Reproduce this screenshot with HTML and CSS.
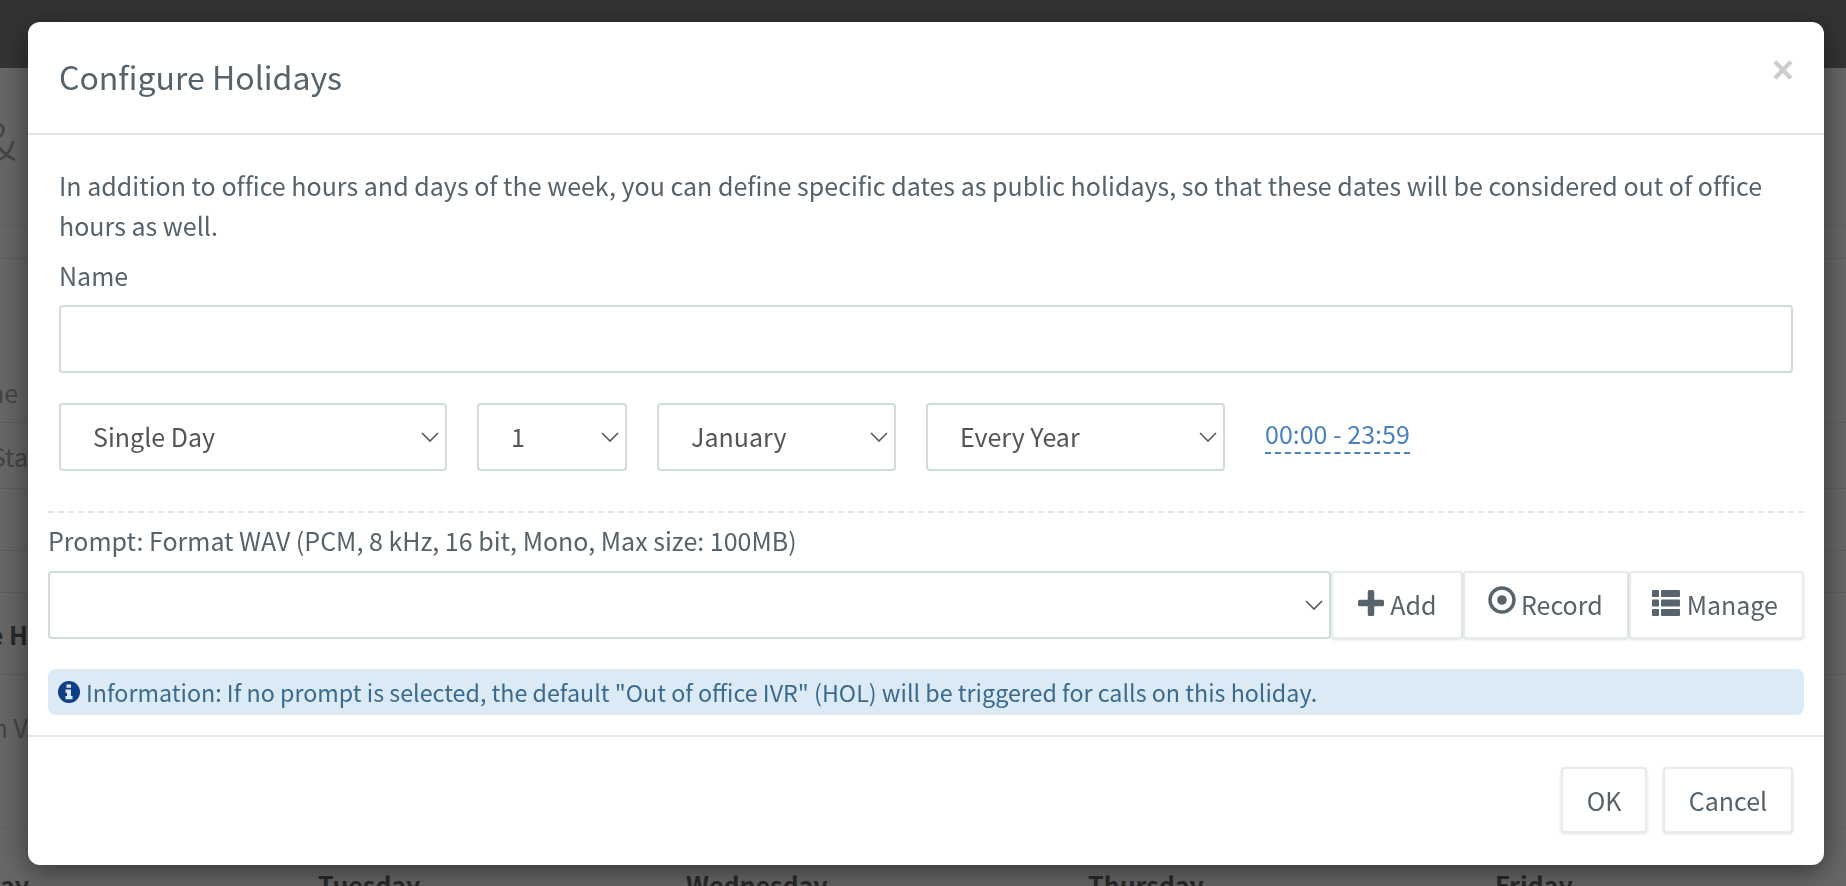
FILE: index.html
```html
<!DOCTYPE html>
<html lang="en">
<head>
    <meta charset="UTF-8">
    <meta name="viewport" content="width=device-width, initial-scale=1.0">
    <title>Configure Holidays</title>
    <link rel="stylesheet" href="styles.css">
</head>
<body>
    <!-- page behind the dialog -->
    <div class="page">
        <div class="topbar"></div>
        <div class="row row-title"><span class="amp">&amp;</span></div>
        <div class="row row-a"></div>
        <div class="row row-b"><span class="peek peek-ne">ne</span></div>
        <div class="row row-c"><span class="peek">Sta</span></div>
        <div class="row row-d"></div>
        <div class="row row-e"></div>
        <div class="row row-f"><span class="peek peek-bold">e H</span></div>
        <div class="row row-g"><span class="peek peek-top">m V</span></div>
        <div class="days">
            <span class="day day-mon">ay</span>
            <span class="day day-tue">Tuesday</span>
            <span class="day day-wed">Wednesday</span>
            <span class="day day-thu">Thursday</span>
            <span class="day day-fri">Friday</span>
        </div>
    </div>
    <div class="backdrop"></div>

    <div class="modal">
        <header class="modal-header">
            <h4 class="modal-title">Configure Holidays</h4>
            <button class="close">×</button>
        </header>
        <section class="modal-body">
            <div class="holiday-form">
                <p class="intro">In addition to office hours and days of the week, you can define specific dates as public holidays, so that these dates will be considered out of office hours as well.</p>
                <label class="field-label" for="holidayName">Name</label>
                <input class="text-input" type="text" id="holidayName">
                <div class="date-row">
                    <div class="select-wrap w-type">
                        <select><option>Single Day</option></select>
                        <svg class="chevron" viewBox="0 0 18 10"><path d="M1 1l8 8 8-8"/></svg>
                    </div>
                    <div class="select-wrap w-day">
                        <select><option>1</option></select>
                        <svg class="chevron" viewBox="0 0 18 10"><path d="M1 1l8 8 8-8"/></svg>
                    </div>
                    <div class="select-wrap w-month">
                        <select><option>January</option></select>
                        <svg class="chevron" viewBox="0 0 18 10"><path d="M1 1l8 8 8-8"/></svg>
                    </div>
                    <div class="select-wrap w-year">
                        <select><option>Every Year</option></select>
                        <svg class="chevron" viewBox="0 0 18 10"><path d="M1 1l8 8 8-8"/></svg>
                    </div>
                    <a class="time-link" href="#time">00:00 - 23:59</a>
                </div>
            </div>
            <div class="prompt">
                <label class="prompt-label">Prompt: Format WAV (PCM, 8 kHz, 16 bit, Mono, Max size: 100MB)</label>
                <div class="prompt-group">
                    <div class="select-wrap w-prompt">
                        <select><option></option></select>
                        <svg class="chevron" viewBox="0 0 18 10"><path d="M1 1l8 8 8-8"/></svg>
                    </div>
                    <button class="btn btn-add">
                        <svg class="icon" viewBox="1 1 24 24"><path d="M10 2.500a1.500 1.500 0 0 1 1.500-1.500h3a1.500 1.500 0 0 1 1.500 1.500v7.500h7.500a1.500 1.500 0 0 1 1.500 1.500v3a1.500 1.500 0 0 1-1.500 1.500h-7.500v7.500a1.500 1.500 0 0 1-1.500 1.500h-3a1.500 1.500 0 0 1-1.500-1.500v-7.500h-7.500a1.500 1.500 0 0 1-1.500-1.500v-3a1.500 1.500 0 0 1 1.500-1.500h7.500z"/></svg>
                        Add
                    </button>
                    <button class="btn btn-record">
                        <svg class="icon icon-record" viewBox="0 0 28 28"><circle cx="14" cy="14" r="12" fill="none" stroke="#57646e" stroke-width="3.4"/><circle cx="14" cy="14" r="4.800"/></svg>
                        Record
                    </button>
                    <button class="btn btn-manage">
                        <svg class="icon icon-list" viewBox="0 0 28 26"><rect x="0" y="0" width="7" height="7" rx="1"/><rect x="9" y="0" width="19" height="7" rx="1"/><rect x="0" y="9.500" width="7" height="7" rx="1"/><rect x="9" y="9.500" width="19" height="7" rx="1"/><rect x="0" y="19" width="7" height="7" rx="1"/><rect x="9" y="19" width="19" height="7" rx="1"/></svg>
                        Manage
                    </button>
                </div>
                <div class="alert-info">
                    <svg class="icon-info" viewBox="0 0 22 22"><circle cx="11" cy="11" r="11" fill="#0f4084"/><path fill="#dbeaf5" d="M8.500 3.500h4.500v3.300h-4.500zM7.500 8.500h5.500v6.500h1.500v3.300h-7v-3.300h1.500v-3.200h-1.500z"/></svg>
                    <span>Information: If no prompt is selected, the default "Out of office IVR" (HOL) will be triggered for calls on this holiday.</span>
                </div>
            </div>
        </section>
        <footer class="modal-footer">
            <button class="btn btn-ok">OK</button>
            <button class="btn btn-cancel">Cancel</button>
        </footer>
    </div>
</body>
</html>
```

FILE: styles.css
```css
* {
    box-sizing: border-box;
}

html, body {
    margin: 0;
    padding: 0;
    height: 100%;
    overflow: hidden;
}

body {
    font-family: "Noto Sans CJK SC", "Noto Sans", sans-serif;
    font-size: 25px;
    line-height: 40px;
    color: #56636d;
    background: #fff;
}

/* page behind the dialog */
.page {
    height: 886px;
    overflow: hidden;
    color: #aaa;
}

.topbar {
    height: 68px;
    background: #808080;
}

.row {
    display: flex;
    align-items: center;
    justify-content: flex-end;
    width: 100%;
    border-bottom: 1px solid #e8e8e8;
    padding-right: 1818px;
    white-space: nowrap;
}

.row-title { height: 158px; border-bottom-color: #eee; }
.row-a { height: 33px; }
.row-b { height: 164px; }
.row-c { height: 66px; }
.row-d { height: 62px; }
.row-e { height: 42px; }
.row-f { height: 82px; }
.row-g { height: 153px; border-bottom-style: dashed; }

.amp {
    font-size: 50px;
    font-weight: 300;
    margin-right: 12px;
    margin-bottom: 18px;
}

.peek-ne {
    align-self: flex-end;
    margin-right: 10px;
    margin-bottom: 10px;
}

.peek-top {
    align-self: flex-start;
    margin-top: 32px;
}

.peek-bold {
    font-weight: 700;
    color: #666;
}

.days {
    display: flex;
    font-weight: 700;
    color: #666;
    padding-top: 36px;
    white-space: nowrap;
}

.day-mon { width: 318px; }
.day-tue { width: 368px; }
.day-wed { width: 402px; }
.day-thu { width: 407px; }

.backdrop {
    position: fixed;
    inset: 0;
    background: rgba(0, 0, 0, 0.6);
}

/* dialog */
.modal {
    position: fixed;
    left: 28px;
    top: 22px;
    width: 1796px;
    height: 843px;
    background: #fff;
    border-radius: 12px;
    box-shadow: 0 6px 28px rgba(0, 0, 0, 0.5);
}

.modal-header {
    height: 113px;
    padding: 33px 31px 0;
    border-bottom: 2px solid #e5e5e5;
    position: relative;
}

.modal-title {
    margin: 0;
    font-size: 32px;
    font-weight: 400;
    line-height: 42px;
}

.close {
    position: absolute;
    top: 23px;
    right: 30px;
    padding: 0;
    border: none;
    background: none;
    font-family: "Liberation Sans", sans-serif;
    font-size: 38px;
    font-weight: 700;
    line-height: 50px;
    color: #ccc;
}

.modal-body {
    padding: 30px 20px 20px;
}

.holiday-form {
    padding: 0 11px;
}

.intro {
    margin: 0 0 10px;
    letter-spacing: 0.01px;
}

.field-label {
    display: block;
    margin-bottom: 10px;
}

.text-input {
    display: block;
    width: 100%;
    height: 68px;
    border: 2px solid #d0dbde;
    border-radius: 4px;
    font: inherit;
    margin-bottom: 30px;
}

.date-row {
    display: flex;
    align-items: center;
    gap: 30px;
}

.select-wrap {
    position: relative;
    height: 68px;
}

.select-wrap select {
    width: 100%;
    height: 100%;
    appearance: none;
    -webkit-appearance: none;
    padding: 0 0 3px 32px;
    border: 2px solid #d0dbde;
    border-radius: 4px;
    background: #fff;
    font: inherit;
    color: #555;
}

.chevron {
    position: absolute;
    right: 8px;
    top: 29px;
    width: 18px;
    height: 10px;
    fill: none;
    stroke: #555;
    stroke-width: 1.6;
}

.w-type { width: 388px; }
.w-day { width: 150px; }
.w-month { width: 239px; }
.w-year { width: 299px; }
.w-prompt { flex: 1; }

.time-link {
    margin-left: 10px;
    margin-bottom: 5px;
    padding-bottom: 1px;
    line-height: 36px;
    color: #4a82c0;
    text-decoration: none;
    border-bottom: 2px dashed #4a82c0;
}

.prompt {
    margin-top: 40px;
    border-top: 2px dashed #e2e8ea;
    padding-top: 7px;
}

.prompt-label {
    display: block;
    margin-bottom: 11px;
}

.prompt-group {
    display: flex;
    height: 68px;
}

.btn {
    height: 68px;
    padding: 0 0 2px;
    border: 2px solid #e6ebed;
    border-radius: 4px;
    background: #fff;
    font: inherit;
    color: #56636d;
    box-shadow: 0 1px 3px rgba(0, 0, 0, 0.12);
}

.btn-add { width: 132px; }
.btn-record { width: 166px; }
.btn-manage { width: 175px; padding-right: 3px; }

.icon {
    width: 26px;
    height: 26px;
    fill: #57646e;
    vertical-align: -1px;
    margin-right: 1px;
}

.icon-record {
    width: 28px;
    height: 28px;
    vertical-align: 1px;
    margin-left: -1px;
    margin-right: -1px;
}

.icon-list {
    width: 28px;
}

.alert-info {
    display: flex;
    align-items: center;
    gap: 6px;
    height: 46px;
    margin-top: 30px;
    padding-left: 10px;
    border-radius: 8px;
    background: #dbeaf5;
    color: #3a6b8f;
    font-size: 23.27px;
}

.icon-info {
    width: 22px;
    height: 22px;
    flex: none;
}

.modal-footer {
    display: flex;
    justify-content: flex-end;
    gap: 16px;
    padding: 30px 31px 0;
    border-top: 2px solid #e5e5e5;
}

.modal-footer .btn {
    height: 66px;
    padding-bottom: 0;
}

.btn-ok { width: 86px; }
.btn-cancel { width: 130px; }
```
